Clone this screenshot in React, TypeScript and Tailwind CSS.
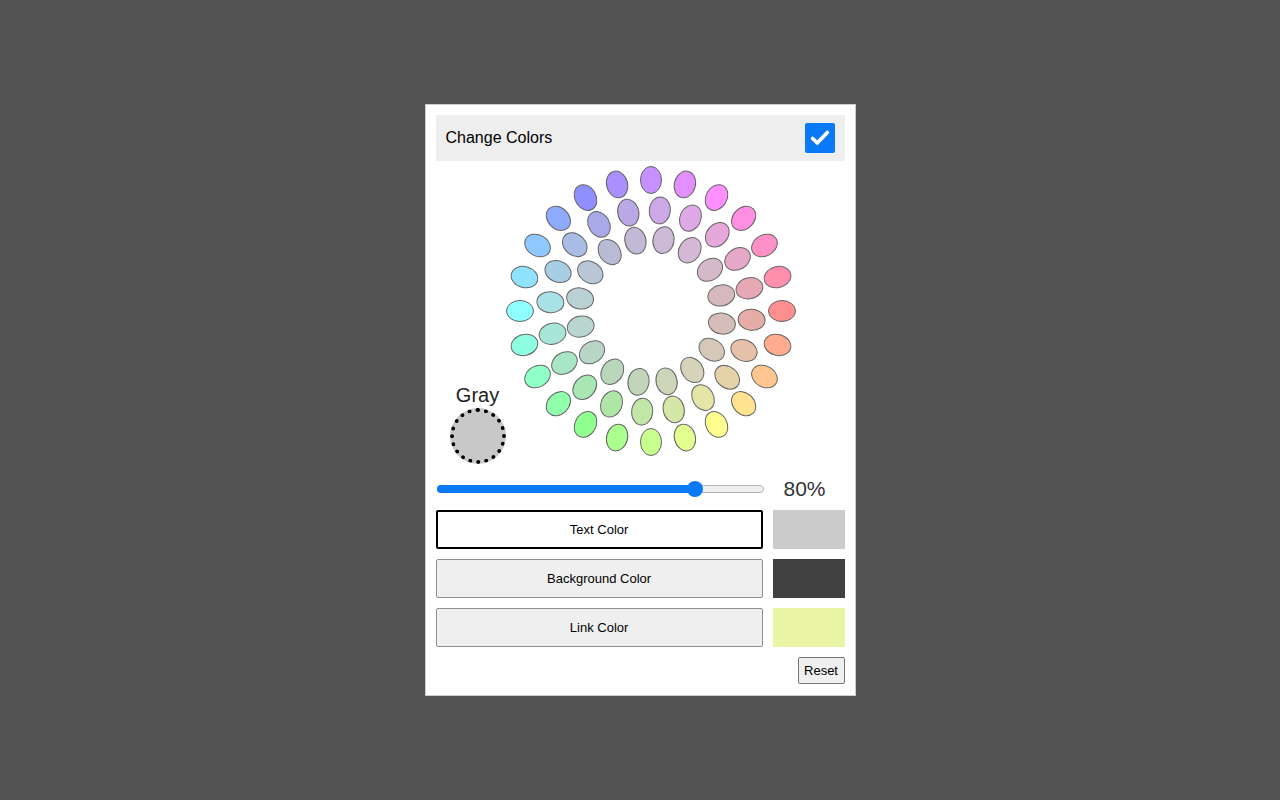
export default function App() {
  const cx = 640
  const cy = 310
  const rings = [
    { r: 131, s: 100 },
    { r: 101, s: 55 },
    { r: 72, s: 25 },
  ]
  const dots: { x: number; y: number; a: number; fill: string }[] = []
  rings.forEach((ring, ri) => {
    const n = 24 - ri * 4
    for (let i = 0; i < n; i++) {
      const a = (i * 360) / n + ri * 5
      const rad = (a * Math.PI) / 180
      dots.push({
        x: cx + ring.r * Math.cos(rad),
        y: cy + ring.r * Math.sin(rad),
        a,
        fill: `hsl(${a}, ${ring.s}%, 78%)`,
      })
    }
  })

  return (
    <div className="min-h-screen bg-[#525252] flex justify-center pt-[104px]" style={{ fontFamily: 'Arial, "Liberation Sans", sans-serif' }}>
      <div className="w-[431px] h-[592px] bg-white border border-[#ccc] px-[10px] pt-[10px]">
        <div className="h-[46px] bg-[#eeeeee] flex items-center justify-between pl-[10px] pr-[10px]">
          <span className="text-[16px] text-black">Change Colors</span>
          <div className="w-[30px] h-[30px] bg-[#0a79f5] rounded-[2px] flex items-center justify-center">
            <svg width="22" height="22" viewBox="0 0 24 24" fill="none" stroke="white" strokeWidth="4" strokeLinecap="round" strokeLinejoin="round">
              <path d="M4 12.5l5 5L20 6" />
            </svg>
          </div>
        </div>
        <div className="relative h-[310px]">
          <svg width="410" height="310" viewBox="425 160 410 310" className="absolute left-0 top-0">
            {dots.map((d, i) => (
              <ellipse
                key={i}
                cx={d.x}
                cy={d.y}
                rx="13.5"
                ry="10.5"
                fill={d.fill}
                stroke="#666"
                strokeWidth="1"
                transform={`rotate(${d.a} ${d.x} ${d.y})`}
              />
            ))}
          </svg>
          <div className="absolute left-[14px] top-[224px] flex flex-col items-center">
            <span className="text-[20px] leading-none text-[#222]">Gray</span>
            <div className="mt-[3px] w-[56px] h-[56px] rounded-full bg-[#c8c8c8] border-[4px] border-dotted border-black" />
          </div>
        </div>
        <div className="flex items-center h-[36px]">
          <div className="relative w-[327px] h-[8px] ml-[1px]">
            <div className="absolute inset-0 rounded-full bg-[#efefef] border border-[#b2b2b2]" />
            <div className="absolute left-0 top-0 h-[8px] w-[260px] rounded-full bg-[#0a79f5]" />
            <div className="absolute left-[250px] top-[-4px] w-[16px] h-[16px] rounded-full bg-[#0a79f5]" />
          </div>
          <span className="ml-[20px] text-[21px] text-[#333]">80%</span>
        </div>
        <div className="flex flex-col gap-[10px] mt-[3px]">
          {[
            { label: 'Text Color', sw: 'bg-[#cbcbcb]', active: true },
            { label: 'Background Color', sw: 'bg-[#404040]', active: false },
            { label: 'Link Color', sw: 'bg-[#e9f5a5]', active: false },
          ].map((b) => (
            <div key={b.label} className="flex gap-[10px] h-[39px]">
              <div
                className={
                  b.active
                    ? 'w-[328px] flex items-center justify-center text-[13px] text-black bg-white border-2 border-black rounded-[2px]'
                    : 'w-[328px] flex items-center justify-center text-[13px] text-black bg-[#efefef] border border-[#8f8f8f] rounded-[2px]'
                }
              >
                {b.label}
              </div>
              <div className={`w-[72px] ${b.sw}`} />
            </div>
          ))}
        </div>
        <div className="flex justify-end mt-[10px]">
          <div className="w-[47px] h-[27px] flex items-center justify-center text-[13px] text-black bg-[#efefef] border border-[#767676] rounded-[2px]">
            Reset
          </div>
        </div>
      </div>
    </div>
  )
}
